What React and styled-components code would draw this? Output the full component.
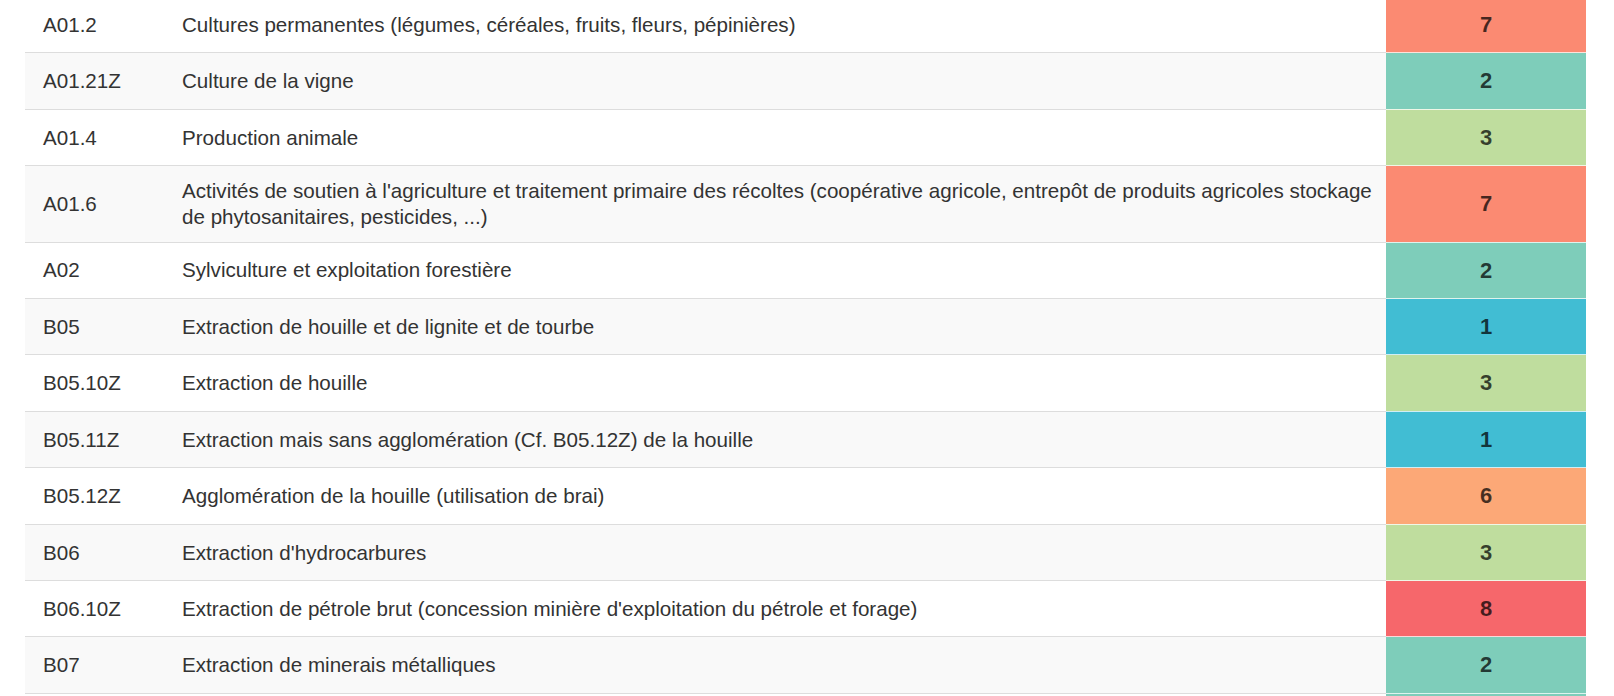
import React from 'react'
import styled, { createGlobalStyle } from 'styled-components'

const GlobalStyle = createGlobalStyle`
  body {
    margin: 0;
    background: #fff;
    font-family: "Liberation Sans", Arial, sans-serif;
    color: #333;
    overflow: hidden;
  }
`;

const Page = styled.div`
  padding: 0 28px 0 25px;
  height: 696px;
  overflow: hidden;
`;

const Table = styled.table`
  width: 100%;
  margin-top: -4px;
  border-collapse: collapse;
  font-size: 20.6px;
  line-height: 25.7px;
`;

const Row = styled.tr`
  background: ${p => (p.$striped ? '#f9f9f9' : '#fff')};
`;

const Code = styled.td`
  width: 103px;
  padding: 12px 18px;
  border-top: 1px solid #ddd;
  vertical-align: middle;
`;

const Label = styled.td`
  padding: 12px 12px 12px 18px;
  border-top: 1px solid #ddd;
  vertical-align: middle;
`;

const Score = styled.td`
  width: 200px;
  box-sizing: border-box;
  padding: 12px 8px;
  border-top: 1px solid rgba(255, 255, 255, 0.75);
  background: ${p => p.$bg};
  color: rgba(0, 0, 0, 0.72);
  font-size: 22px;
  line-height: 31.4px;
  font-weight: bold;
  text-align: center;
  vertical-align: middle;
`;

const palette = {
  1: '#41bdd3',
  2: '#7ecdba',
  3: '#bfdd9e',
  6: '#fca877',
  7: '#fb8a72',
  8: '#f6676b',
};

const rows = [
  ['A01.2', 'Cultures permanentes (légumes, céréales, fruits, fleurs, pépinières)', 7],
  ['A01.21Z', 'Culture de la vigne', 2],
  ['A01.4', 'Production animale', 3],
  ['A01.6', "Activités de soutien à l'agriculture et traitement primaire des récoltes (coopérative agricole, entrepôt de produits agricoles stockage de phytosanitaires, pesticides, ...)", 7],
  ['A02', 'Sylviculture et exploitation forestière', 2],
  ['B05', 'Extraction de houille et de lignite et de tourbe', 1],
  ['B05.10Z', 'Extraction de houille', 3],
  ['B05.11Z', 'Extraction mais sans agglomération (Cf. B05.12Z) de la houille', 1],
  ['B05.12Z', 'Agglomération de la houille (utilisation de brai)', 6],
  ['B06', "Extraction d'hydrocarbures", 3],
  ['B06.10Z', "Extraction de pétrole brut (concession minière d'exploitation du pétrole et forage)", 8],
  ['B07', 'Extraction de minerais métalliques', 2],
  ['B07.10Z', 'Extraction de minerais de fer', 2],
];

const App = () => {
  return (
    <Page>
      <GlobalStyle />
      <Table>
        <tbody>
          {rows.map(([code, label, score], i) => (
            <Row key={code} $striped={i % 2 === 1}>
              <Code>{code}</Code>
              <Label>{label}</Label>
              <Score $bg={palette[score]}>{score}</Score>
            </Row>
          ))}
        </tbody>
      </Table>
    </Page>
  )
}

export default App
